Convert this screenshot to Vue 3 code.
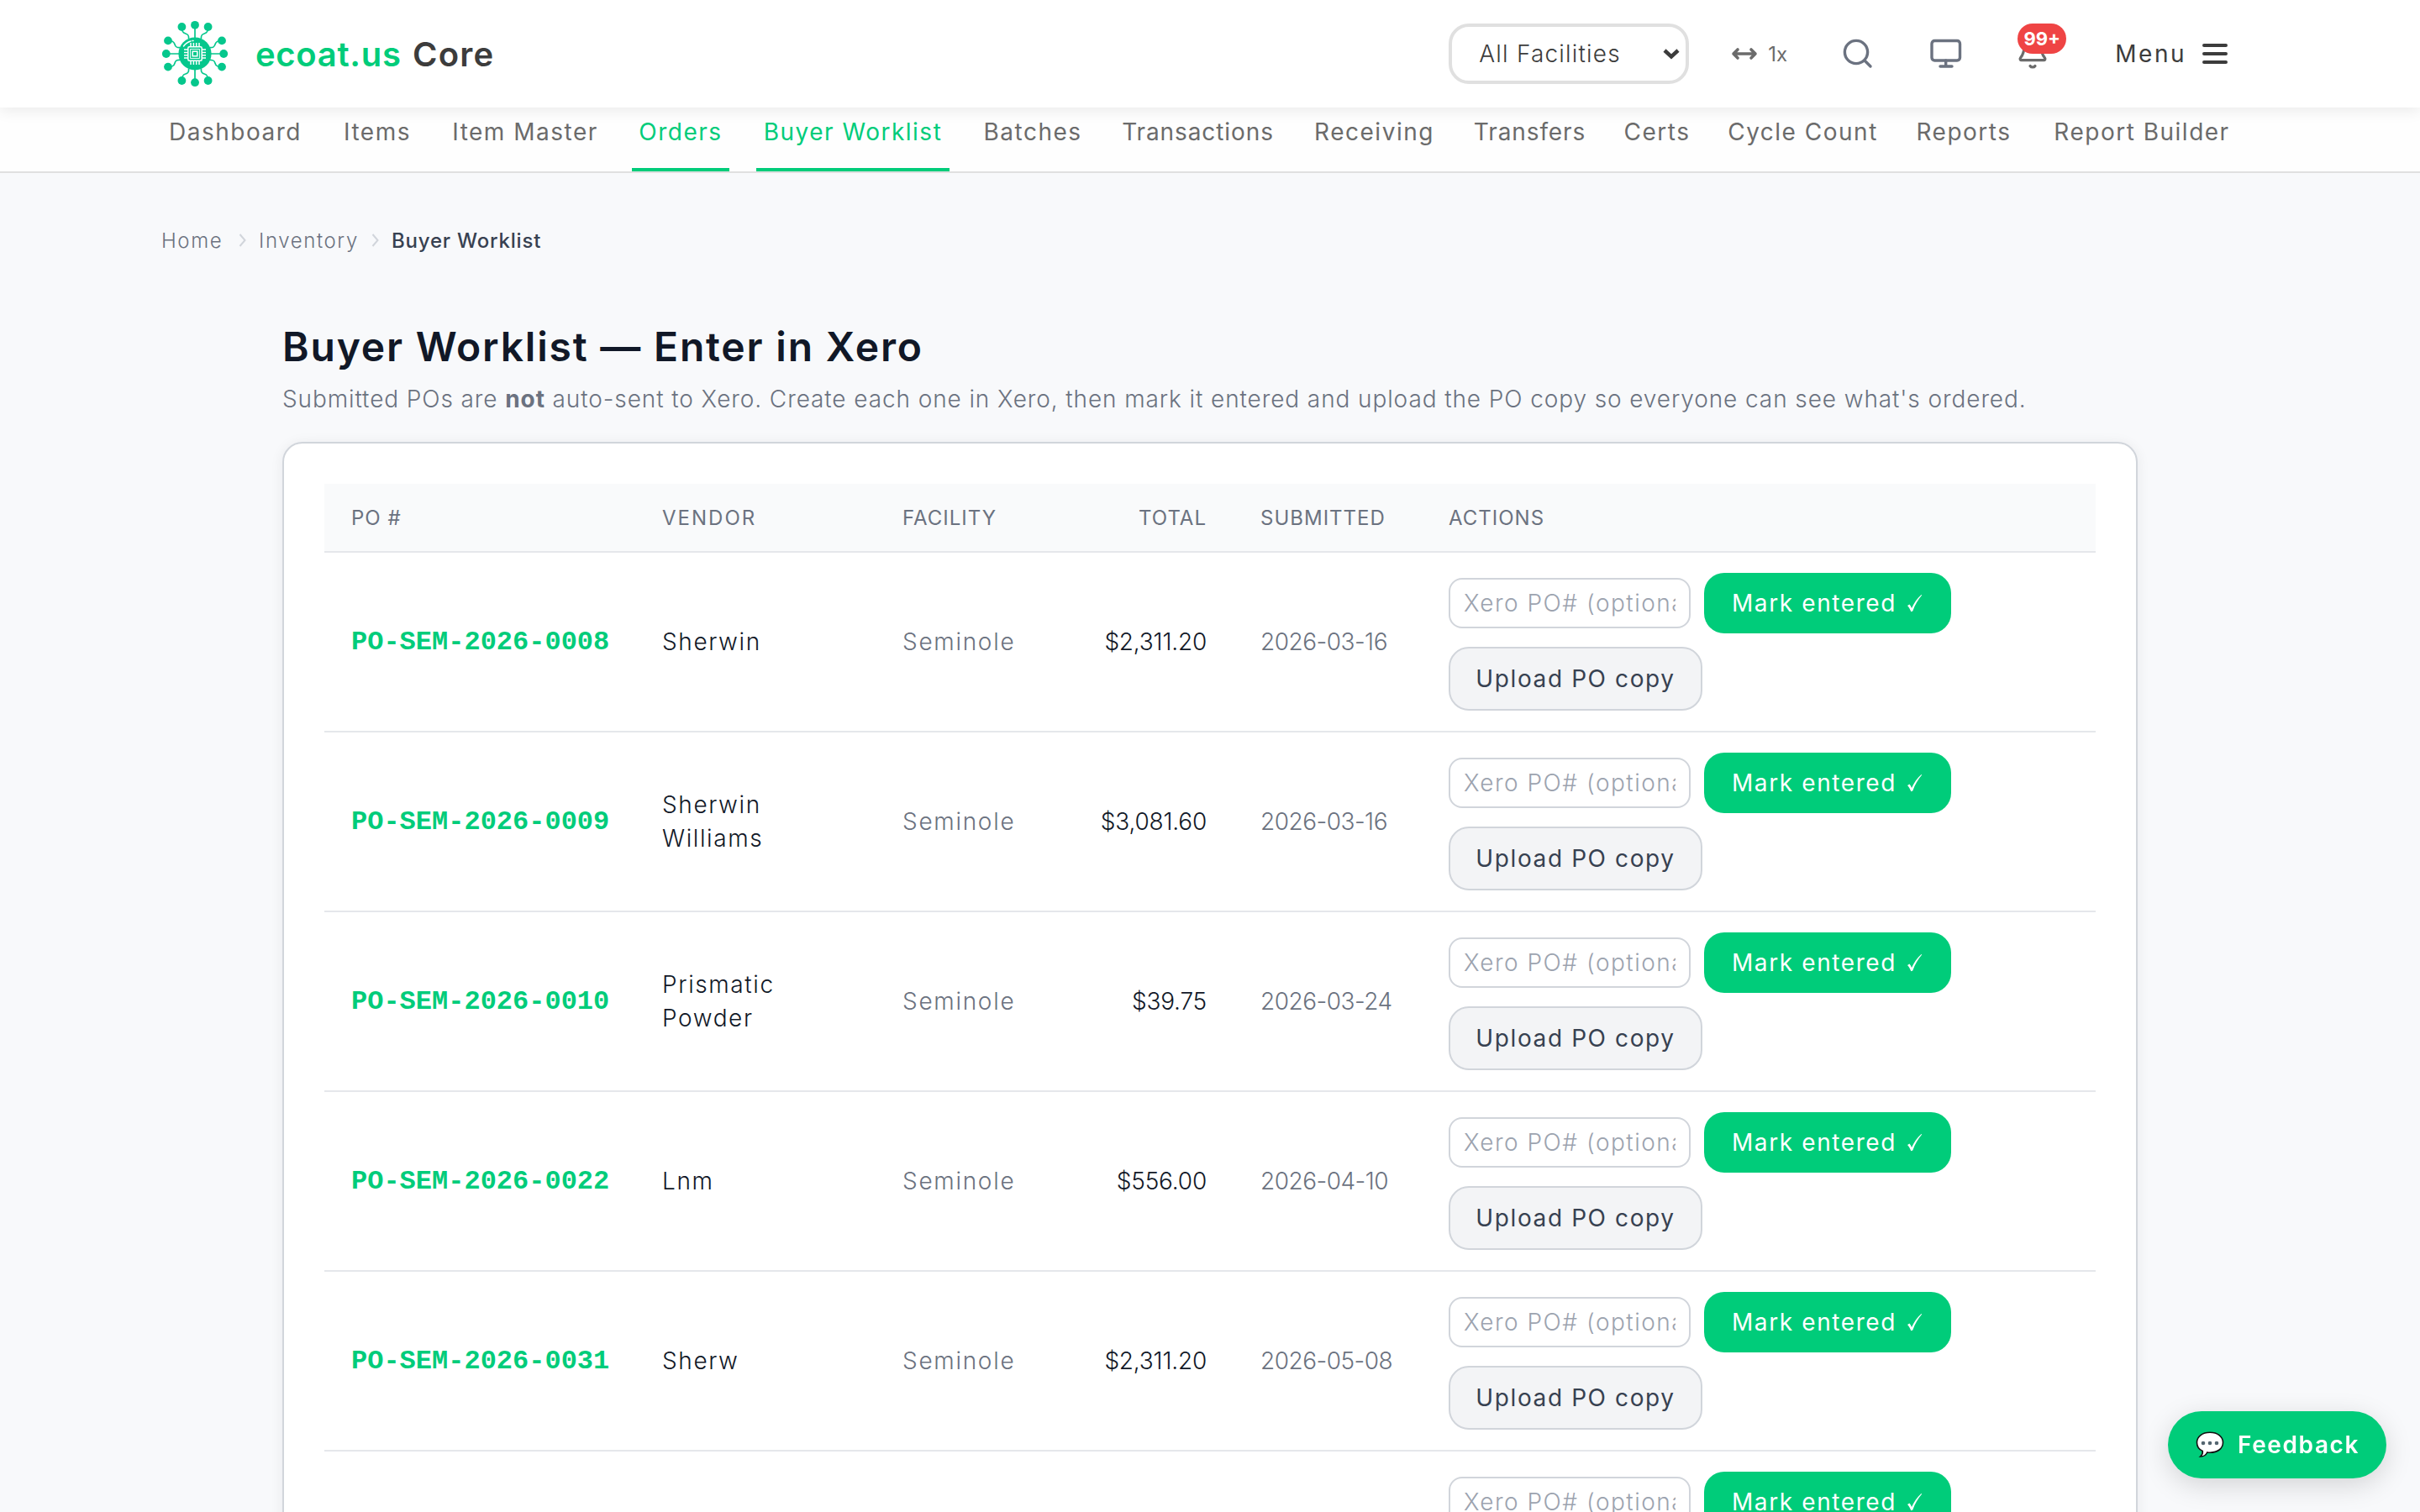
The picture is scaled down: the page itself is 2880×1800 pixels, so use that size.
<template>
  <div class="page">
    <header class="topbar">
      <a class="brand" href="#">
        <svg class="brand-logo" viewBox="0 0 80 80" fill="none">
          <g stroke="#05c78c" stroke-width="1.7">
            <path d="M40 6v68M6 40h68" />
            <path d="M24.300 8c0 5 1 7 4.500 8 3 .8 4 2 3.800 6" />
            <path d="M55.700 8c0 5-1 7-4.500 8-3 .8-4 2-3.800 6" />
            <path d="M24.300 72c0-5 1-7 4.500-8 3-.8 4-2 3.800-6" />
            <path d="M55.700 72c0-5-1-7-4.500-8-3-.8-4-2-3.800-6" />
            <path d="M8 24.300c5 0 7 1 8 4.500.8 3 2 4 6 3.800" />
            <path d="M8 55.700c5 0 7-1 8-4.500.8-3 2-4 6-3.800" />
            <path d="M72 24.300c-5 0-7 1-8 4.500-.8 3-2 4-6 3.800" />
            <path d="M72 55.700c-5 0-7-1-8-4.500-.8-3-2-4-6-3.800" />
          </g>
          <g fill="#05c78c">
            <circle v-for="(n, i) in logoNodes" :key="i" :cx="n[0]" :cy="n[1]" r="4.900" />
            <circle cx="40" cy="40" r="19.600" />
          </g>
          <g stroke="#fff" stroke-width="1.500">
            <rect x="31.800" y="31.800" width="16.400" height="16.400" rx="1.500" />
            <rect x="34.600" y="34.600" width="10.800" height="10.800" stroke-width="0.900" />
            <rect x="37.200" y="37.200" width="5.600" height="5.600" />
            <path d="M35 27v4.500M38.400 27v4.500M41.700 27v4.500M45 27v4.500M35 48.500V53M38.400 48.500V53M41.700 48.500V53M45 48.500V53" />
            <path d="M27 35h4.500M27 38.400h4.500M27 41.700h4.500M27 45h4.500M48.500 35H53M48.500 38.400H53M48.500 41.700H53M48.500 45H53" />
            <path d="M26.500 31c2-3 5-5 8.500-6M37 24.500h1" stroke-linecap="round" />
          </g>
        </svg>
        <span class="brand-name">ecoat.us</span>
        <span class="brand-suffix">Core</span>
      </a>

      <div class="tools">
        <div class="facility-select">
          <span>All Facilities</span>
          <svg width="20" height="14" viewBox="0 0 20 14" fill="none" stroke="#3c3c3c" stroke-width="4.500">
            <path d="M2 3l8 7.500L18 3" />
          </svg>
        </div>
        <button class="width-toggle">
          <svg width="32" height="18" viewBox="0 0 32 18" fill="none" stroke="#6b6b6b" stroke-width="3.600" stroke-linecap="round" stroke-linejoin="round">
            <path d="M3 9h26M8 4L3 9l5 5M24 4l5 5-5 5" />
          </svg>
          <span>1x</span>
        </button>
        <svg class="icon icon-search" viewBox="0 0 40 40" fill="none" stroke="#6b7280" stroke-width="3.400" stroke-linecap="round">
          <circle cx="18" cy="18" r="13.600" />
          <path d="M28 28l7 7" />
        </svg>
        <svg class="icon icon-screen" viewBox="0 0 40 40" fill="none" stroke="#6b7280" stroke-width="3.400" stroke-linecap="round" stroke-linejoin="round">
          <rect x="3" y="4.500" width="33.500" height="23.500" rx="3.400" />
          <path d="M19.700 28v7M13 35h14" />
        </svg>
        <div class="bell">
          <svg class="icon" viewBox="0 3.500 40 40" fill="none" stroke="#6b6b6b" stroke-width="3.200" stroke-linecap="round" stroke-linejoin="round">
            <path d="M30 14a10 10 0 0 0-20 0c0 8.500-2 11.500-4.500 14.500-.9 1.200-.2 2.700 1.200 2.700h26.600c1.400 0 2.100-1.500 1.200-2.700C32 25.500 30 22.500 30 14z" />
            <path d="M17 38c1.400 2 4.600 2 6 0" />
          </svg>
          <span class="badge">99+</span>
        </div>
        <button class="menu">
          <span>Menu</span>
          <svg width="30" height="26" viewBox="0 0 30 26" stroke="#3c3c3c" stroke-width="4" stroke-linecap="round">
            <path d="M2 3h26M2 13h26M2 23h26" />
          </svg>
        </button>
      </div>
    </header>

    <nav class="subnav">
      <a v-for="link in links" :key="link.label" href="#" :class="{ active: link.active, tight: link.tight }" :style="{ width: link.width + 'px' }">{{ link.label }}</a>
    </nav>

    <div class="breadcrumb">
      <a href="#" class="crumb-home">Home</a>
      <svg width="10" height="18" viewBox="0 0 10 18" fill="none" stroke="#d1d5db" stroke-width="2"><path d="M1.500 2l6 7-6 7" /></svg>
      <a href="#" class="crumb-inventory">Inventory</a>
      <svg width="10" height="18" viewBox="0 0 10 18" fill="none" stroke="#d1d5db" stroke-width="2"><path d="M1.500 2l6 7-6 7" /></svg>
      <span class="current">Buyer Worklist</span>
    </div>

    <main class="content">
      <h1>Buyer Worklist — Enter in Xero</h1>
      <p class="intro">Submitted POs are <strong>not</strong> auto-sent to Xero. Create each one in Xero, then mark it entered and upload the PO copy so everyone can see what's ordered.</p>

      <section class="card">
        <table>
          <colgroup>
            <col class="col-po">
            <col class="col-vendor">
            <col class="col-facility">
            <col class="col-total">
            <col class="col-date">
            <col>
          </colgroup>
          <thead>
            <tr>
              <th>PO #</th>
              <th class="wide">Vendor</th>
              <th>Facility</th>
              <th class="right">Total</th>
              <th>Submitted</th>
              <th>Actions</th>
            </tr>
          </thead>
          <tbody>
            <tr v-for="order in orders" :key="order.po">
              <td><a href="#" class="po">{{ order.po }}</a></td>
              <td class="vendor">{{ order.vendor }}</td>
              <td class="facility">{{ order.facility }}</td>
              <td class="right total">{{ order.total }}</td>
              <td class="date">{{ order.submitted }}</td>
              <td>
                <div class="actions">
                  <input type="text" v-model="order.xeroPo" placeholder="Xero PO# (optional)">
                  <button class="btn btn-primary">Mark entered <svg width="20" height="22" viewBox="0 0 20 22" fill="#fff"><path d="M1 14l2.500-1.500c1 1.300 1.800 2.800 2.500 4.500C9 10.500 12.500 5.500 17.500 1l.7.600C13.500 7 10 13 7.300 20.500l-2 .8C4.200 18.500 2.800 16 1 14z" /></svg></button>
                  <button v-if="order.po" class="btn btn-light">Upload PO copy</button>
                  <div v-else class="btn btn-light"></div>
                </div>
              </td>
            </tr>
          </tbody>
        </table>
      </section>
    </main>

    <button class="feedback">
      <svg width="34" height="32" viewBox="0 0 34 32">
        <path d="M17 1.300C8 1.300 1.500 6 1.500 13.300c0 5.200 3 8.600 6.800 10.200.3 2.700-.8 4.800-2.800 6.500 4 .2 6.800-2 8.300-5 1 .2 2.100.2 3.200.2 9 0 15.500-4.600 15.500-11.900S26 1.300 17 1.300z" fill="#fff" stroke="#111" stroke-width="1.600" />
        <g fill="#546570">
          <circle cx="9" cy="14" r="2.300" />
          <circle cx="17" cy="14" r="2.300" />
          <circle cx="25" cy="14" r="2.300" />
        </g>
      </svg>
      <span>Feedback</span>
    </button>
  </div>
</template>

<script setup>
import { ref } from 'vue';

const logoNodes = [
  [40, 5.8], [40, 74.2], [5.8, 40], [74.2, 40],
  [24.4, 8], [55.6, 8], [24.4, 72], [55.6, 72],
  [8, 24.4], [8, 55.6], [72, 24.4], [72, 55.6],
];

const links = [
  { label: 'Dashboard', width: 176 },
  { label: 'Items', width: 98 },
  { label: 'Item Master', width: 190 },
  { label: 'Orders', width: 116, active: true },
  { label: 'Buyer Worklist', width: 230, active: true },
  { label: 'Batches', width: 134 },
  { label: 'Transactions', width: 195, tight: true },
  { label: 'Receiving', width: 161 },
  { label: 'Transfers', width: 145, tight: true },
  { label: 'Certs', width: 94 },
  { label: 'Cycle Count', width: 189 },
  { label: 'Reports', width: 130 },
  { label: 'Report Builder', width: 230 },
];

const orders = ref([
  { po: 'PO-SEM-2026-0008', vendor: 'Sherwin', facility: 'Seminole', total: '$2,311.20', submitted: '2026-03-16', xeroPo: '' },
  { po: 'PO-SEM-2026-0009', vendor: 'Sherwin Williams', facility: 'Seminole', total: '$3,081.60', submitted: '2026-03-16', xeroPo: '' },
  { po: 'PO-SEM-2026-0010', vendor: 'Prismatic Powder', facility: 'Seminole', total: '$39.75', submitted: '2026-03-24', xeroPo: '' },
  { po: 'PO-SEM-2026-0022', vendor: 'Lnm', facility: 'Seminole', total: '$556.00', submitted: '2026-04-10', xeroPo: '' },
  { po: 'PO-SEM-2026-0031', vendor: 'Sherw', facility: 'Seminole', total: '$2,311.20', submitted: '2026-05-08', xeroPo: '' },
  { po: '', vendor: '', facility: '', total: '', submitted: '', xeroPo: '' },
]);
</script>

<style>
html,
body {
  background: #f8f9fb;
  overflow: hidden;
}
</style>

<style scoped>
.page {
  height: 1800px;
  overflow: hidden;
  background: #f8f9fb;
  font-family: Inter, "Liberation Sans", sans-serif;
  font-size: 28px;
  font-weight: 300;
  color: #111827;
}

a {
  color: inherit;
  text-decoration: none;
}

button {
  font: inherit;
  border: none;
  background: none;
  padding: 0;
  white-space: nowrap;
}

svg {
  flex: none;
}

.topbar {
  position: relative;
  z-index: 2;
  display: flex;
  justify-content: space-between;
  align-items: center;
  box-sizing: border-box;
  height: 128px;
  padding: 0 229px 0 192px;
  background: #fff;
  box-shadow: 0 4px 16px rgba(0, 0, 0, 0.08);
}

.brand {
  display: flex;
  align-items: center;
  font-size: 40px;
  font-weight: 600;
}

.brand-logo {
  width: 80px;
  height: 80px;
  margin-right: 32px;
}

.brand-name {
  width: 187px;
  color: #00cc7a;
  letter-spacing: 0.7px;
}

.brand-suffix {
  color: #3c3c3c;
  letter-spacing: 1.2px;
}

.tools {
  display: flex;
  align-items: center;
  color: #3c3c3c;
}

.facility-select {
  display: flex;
  justify-content: space-between;
  align-items: center;
  box-sizing: border-box;
  width: 286px;
  height: 72px;
  padding: 0 7px 0 32px;
  border: 4px solid #e0e0e0;
  border-radius: 24px;
  letter-spacing: 1.2px;
}

.width-toggle {
  display: flex;
  align-items: center;
  gap: 12px;
  width: 66px;
  margin: 0 65px 0 50px;
  font-size: 24px;
  font-weight: 400;
  color: #6b6b6b;
}

.icon {
  width: 40px;
  height: 40px;
}

.icon-screen {
  margin-left: 65px;
}

.bell {
  position: relative;
  display: flex;
  margin: 0 78px 0 63px;
}

.bell .icon {
  overflow: visible;
}

.badge {
  position: absolute;
  top: -16px;
  left: 2px;
  width: 58px;
  height: 36px;
  border-radius: 18px;
  background: #ef4444;
  color: #fff;
  font-size: 22px;
  font-weight: 700;
  line-height: 36px;
  text-align: center;
}

.menu {
  display: flex;
  align-items: center;
  gap: 19px;
  color: #3c3c3c;
  font-weight: 400;
  letter-spacing: 2.5px;
}

.subnav {
  display: flex;
  gap: 32px;
  box-sizing: border-box;
  height: 78px;
  padding-left: 192px;
  border-bottom: 2px solid #e0e0e0;
  background: #fefefe;
}

.subnav a {
  box-sizing: border-box;
  height: 76px;
  padding-top: 10px;
  color: #6b6b6b;
  font-weight: 400;
  line-height: 38px;
  letter-spacing: 1.5px;
  text-align: center;
  white-space: nowrap;
}

.subnav a.tight {
  letter-spacing: 0.9px;
}

.subnav a.active {
  border-bottom: 4px solid #00cc7a;
  color: #00cc7a;
}

.breadcrumb {
  display: flex;
  align-items: center;
  height: 32px;
  margin: 64px 0 0 192px;
  font-size: 24px;
  color: #6b7280;
  letter-spacing: 1.6px;
}

.crumb-home {
  width: 92px;
}

.crumb-inventory {
  width: 134px;
  margin-left: 14px;
}

.breadcrumb .current {
  margin-left: 14px;
  color: #374151;
  font-weight: 500;
  letter-spacing: 0.8px;
}

.content {
  width: 2208px;
  margin: 0 auto;
  padding-top: 80px;
}

h1 {
  margin: 0;
  font-size: 48px;
  font-weight: 600;
  line-height: 62px;
  letter-spacing: 1.8px;
}

.intro {
  margin: 10px 0 30px;
  color: #6b7280;
  line-height: 42px;
  white-space: nowrap;
  letter-spacing: 0.9px;
}

.intro strong {
  font-weight: 700;
}

.card {
  box-sizing: border-box;
  padding: 48px;
  border: 2px solid #d1d5db;
  border-radius: 24px;
  background: #fff;
  box-shadow: 0 2px 16px rgba(15, 23, 42, 0.07);
}

table {
  width: 100%;
  table-layout: fixed;
  border-collapse: separate;
  border-spacing: 0;
}

.col-po {
  width: 370px;
}

.col-vendor {
  width: 286px;
}

.col-facility,
.col-total {
  width: 213px;
}

.col-date {
  width: 224px;
}

th {
  box-sizing: border-box;
  height: 82px;
  padding: 0 32px;
  border-bottom: 2px solid #e5e7eb;
  background: #f9fafb;
  color: #6b7280;
  font-size: 24px;
  font-weight: 400;
  letter-spacing: 1px;
  text-align: left;
  text-transform: uppercase;
}

th.wide {
  letter-spacing: 2px;
}

td {
  height: 164px;
  padding: 24px 32px;
  border-bottom: 2px solid #e5e7eb;
  line-height: 40px;
  vertical-align: middle;
}

.right {
  text-align: right;
}

.vendor {
  letter-spacing: 1.6px;
}

.facility {
  color: #6b7280;
  letter-spacing: 1.7px;
}

.total {
  letter-spacing: -0.2px;
}

.date {
  color: #6b7280;
  letter-spacing: -0.5px;
  white-space: nowrap;
}

.po {
  color: #00cc7a;
  font-family: "Liberation Mono", monospace;
  font-size: 32px;
  font-weight: 700;
  white-space: nowrap;
}

.actions {
  display: flex;
  flex-wrap: wrap;
  align-items: center;
  gap: 16px;
  width: 640px;
}

input {
  box-sizing: border-box;
  width: 288px;
  height: 60px;
  padding: 0 16px;
  border: 2px solid #d1d5db;
  border-radius: 16px;
  background: #fff;
  font: inherit;
  letter-spacing: 1.5px;
}

input::placeholder {
  color: #9ca3af;
}

.btn {
  display: flex;
  justify-content: center;
  align-items: center;
  box-sizing: border-box;
  border-radius: 24px;
  font-weight: 400;
  letter-spacing: 1.6px;
}

.btn-primary {
  gap: 12px;
  width: 294px;
  height: 72px;
  background: #00cc7a;
  color: #fff;
}

.btn-light {
  width: 302px;
  height: 76px;
  border: 2px solid #d1d5db;
  background: #f3f4f6;
  color: #374151;
}

.feedback {
  position: fixed;
  right: 40px;
  bottom: 40px;
  display: flex;
  align-items: center;
  gap: 16px;
  width: 260px;
  height: 80px;
  padding-left: 33px;
  border-radius: 40px;
  background: #00cc7a;
  box-shadow: 0 8px 32px rgba(0, 0, 0, 0.15);
  color: #fff;
  font-weight: 600;
  letter-spacing: 1.6px;
}
</style>
